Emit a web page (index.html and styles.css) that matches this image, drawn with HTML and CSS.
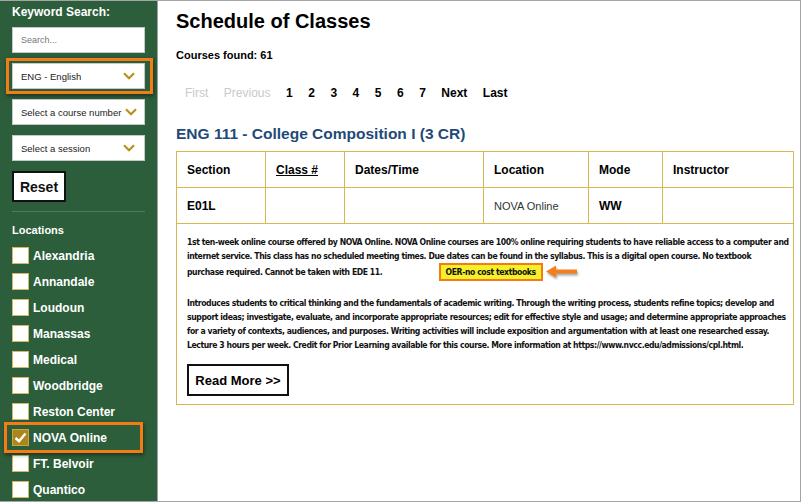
FILE: index.html
```html
<!DOCTYPE html>
<html lang="en">

<head>
    <meta charset="UTF-8">
    <title>Schedule of Classes</title>
    <link rel="stylesheet" href="styles.css">
</head>

<body>
    <div class="frame">
        <aside class="sidebar">
            <div class="side-title">Keyword Search:</div>
            <div class="field search">Search...</div>
            <div class="field select marked">ENG - English
                <svg class="chev" width="12" height="8" viewBox="0 0 12 8"><path d="M1 1.2 L6 6.2 L11 1.2" fill="none" stroke="#b8911d" stroke-width="2.2"/></svg>
            </div>
            <div class="field select">Select a course number
                <svg class="chev" width="12" height="8" viewBox="0 0 12 8"><path d="M1 1.2 L6 6.2 L11 1.2" fill="none" stroke="#b8911d" stroke-width="2.2"/></svg>
            </div>
            <div class="field select">Select a session
                <svg class="chev" width="12" height="8" viewBox="0 0 12 8"><path d="M1 1.2 L6 6.2 L11 1.2" fill="none" stroke="#b8911d" stroke-width="2.2"/></svg>
            </div>
            <button class="reset">Reset</button>
            <hr class="sep">
            <div class="side-title locs">Locations</div>
            <ul class="locations">
                <li><span class="box"></span>Alexandria</li>
                <li><span class="box"></span>Annandale</li>
                <li><span class="box"></span>Loudoun</li>
                <li><span class="box"></span>Manassas</li>
                <li><span class="box"></span>Medical</li>
                <li><span class="box"></span>Woodbridge</li>
                <li><span class="box"></span>Reston Center</li>
                <li class="marked"><span class="box checked">
                    <svg width="13" height="11" viewBox="0 0 13 11"><path d="M1.5 6 L5 9.2 L11.5 1.5" fill="none" stroke="#fff" stroke-width="2.4"/></svg>
                </span>NOVA Online</li>
                <li><span class="box"></span>FT. Belvoir</li>
                <li><span class="box"></span>Quantico</li>
            </ul>
        </aside>

        <main class="main">
            <h1>Schedule of Classes</h1>
            <p class="found">Courses found: 61</p>
            <nav class="pager">
                <span class="off">First</span>
                <span class="off">Previous</span>
                <a>1</a><a>2</a><a>3</a><a>4</a><a>5</a><a>6</a><a>7</a>
                <a>Next</a>
                <a>Last</a>
            </nav>
            <h2>ENG 111 - College Composition I (3 CR)</h2>
            <table class="classes">
                <tr>
                    <th class="c1">Section</th>
                    <th class="c2"><u>Class #</u></th>
                    <th class="c3">Dates/Time</th>
                    <th class="c4">Location</th>
                    <th class="c5">Mode</th>
                    <th>Instructor</th>
                </tr>
                <tr>
                    <td class="b">E01L</td>
                    <td></td>
                    <td></td>
                    <td class="loc">NOVA Online</td>
                    <td class="b">WW</td>
                    <td></td>
                </tr>
                <tr>
                    <td colspan="6" class="desc">
                        <p>1st ten-week online course offered by NOVA Online. NOVA Online courses are 100% online requiring students to have reliable access to a computer and internet service. This class has no scheduled meeting times. Due dates can be found in the syllabus. This is a digital open course. No textbook purchase required. Cannot be taken with EDE 11. <span class="oer">OER-no cost textbooks</span><svg class="arrow" width="36" height="18" viewBox="0 0 36 18"><path d="M2 8.5 L12 2.5 L12 6.5 L33 6.5 L33 10.5 L12 10.5 L12 14.5 Z" fill="#f37f1c"/></svg></p>
                        <p>Introduces students to critical thinking and the fundamentals of academic writing. Through the writing process, students refine topics; develop and support ideas; investigate, evaluate, and incorporate appropriate resources; edit for effective style and usage; and determine appropriate approaches for a variety of contexts, audiences, and purposes. Writing activities will include exposition and argumentation with at least one researched essay. Lecture 3 hours per week. Credit for Prior Learning available for this course. More information at https://www.nvcc.edu/admissions/cpl.html.</p>
                        <button class="more">Read More &gt;&gt;</button>
                    </td>
                </tr>
            </table>
        </main>
    </div>
</body>

</html>
```

FILE: styles.css
```css
body {
    margin: 0;
    background: #fff;
    font-family: "Liberation Sans", Arial, sans-serif;
}

.frame {
    width: 801px;
    height: 502px;
    box-sizing: border-box;
    border: 1px solid #a4a4a4;
    border-left: none;
    display: flex;
    overflow: hidden;
}

/* sidebar */
.sidebar {
    width: 158px;
    flex: none;
    background: #2c5e3b;
    border-right: 1px solid #9aa39c;
    padding: 3px 12px 0 12px;
    box-sizing: border-box;
    color: #fff;
}

.side-title {
    font-weight: bold;
    font-size: 12px;
    line-height: 16px;
    margin-bottom: 7px;
}

.field {
    height: 26px;
    box-sizing: border-box;
    background: #fff;
    border: 1px solid #c8c8c8;
    color: #222;
    font-size: 9.5px;
    display: flex;
    align-items: center;
    justify-content: space-between;
    padding: 0 8px;
    margin-bottom: 10px;
    white-space: nowrap;
}

.field.search {
    color: #777;
    font-size: 9px;
}

.chev {
    flex: none;
    margin-left: 4px;
    margin-right: 1px;
}

.marked {
    position: relative;
}

.marked::after {
    content: '';
    position: absolute;
    top: -6px;
    left: -7px;
    right: -9px;
    bottom: -6px;
    border: 3px solid #f47b16;
    box-shadow: 1px 2px 4px rgba(0, 0, 0, 0.45);
    pointer-events: none;
}

.reset {
    display: block;
    width: 54px;
    height: 31px;
    background: #fff;
    border: 2px solid #111;
    font-family: "Liberation Sans", Arial, sans-serif;
    font-weight: bold;
    font-size: 14px;
    color: #111;
    padding: 0;
}

.sep {
    border: none;
    border-top: 1px solid #4f7b5b;
    margin: 9px 0 10px;
}

.side-title.locs {
    font-size: 11px;
    margin-bottom: 9px;
}

.locations {
    list-style: none;
    margin: 0;
    padding: 0;
}

.locations li {
    display: flex;
    align-items: center;
    gap: 4px;
    height: 17px;
    margin-bottom: 9px;
    font-weight: bold;
    font-size: 12px;
}

.locations li.marked::after {
    top: -7px;
    left: -8px;
    right: 2px;
    bottom: -7px;
}

.box {
    width: 17px;
    height: 17px;
    box-sizing: border-box;
    background: #fff;
    border: 1px solid #d2b861;
    flex: none;
    display: flex;
    align-items: center;
    justify-content: center;
}

.box.checked {
    background: #ac861c;
    border-color: #c9a640;
}

/* main */
.main {
    flex: 1;
    padding: 8px 5px 0 18px;
    color: #000;
}

h1 {
    margin: 0;
    font-size: 20px;
    line-height: 24px;
}

.found {
    margin: 15px 0 0;
    font-size: 11px;
    line-height: 14px;
    font-weight: bold;
}

.pager {
    display: flex;
    gap: 15.5px;
    padding-left: 9px;
    margin-top: 23px;
    font-size: 12px;
    line-height: 16px;
    font-weight: bold;
}

.pager .off {
    color: #c9c9c9;
    font-weight: normal;
}

h2 {
    margin: 23px 0 0;
    font-size: 15.5px;
    line-height: 20px;
    color: #1f4a77;
}

.classes {
    margin-top: 7px;
    width: 618px;
    border-collapse: collapse;
    font-size: 12px;
}

.classes th,
.classes td {
    border: 1.5px solid #d6b752;
    height: 34px;
    padding: 1px 10px 0;
    text-align: left;
    vertical-align: middle;
}

.classes th {
    font-weight: bold;
}

.c1 { width: 68px; }
.c2 { width: 58px; }
.c3 { width: 118px; }
.c4 { width: 84px; }
.c5 { width: 53px; }

.classes td.b {
    font-weight: bold;
}

.classes td.loc {
    color: #333;
    font-size: 11px;
}

.classes td.desc {
    padding: 11px 3px 8px 10px;
    vertical-align: top;
}

.desc p {
    margin: 0 0 15px;
    font-family: "DejaVu Sans Condensed", "Liberation Sans", sans-serif;
    font-weight: bold;
    font-size: 8.6px;
    letter-spacing: -0.42px;
    line-height: 14px;
    color: #111;
}

.desc p + p {
    margin-bottom: 0;
}

.oer {
    display: inline-block;
    margin-left: 56px;
    padding: 1px 5px;
    background: #f6f02a;
    outline: 2px solid #f47b16;
    line-height: 12px;
}

.arrow {
    vertical-align: middle;
    margin-left: 3px;
    filter: drop-shadow(1px 2px 1px rgba(0, 0, 0, 0.35));
}

.more {
    display: block;
    margin-top: 12px;
    width: 102px;
    height: 32px;
    background: #fff;
    border: 2px solid #111;
    font-family: "Liberation Sans", Arial, sans-serif;
    font-weight: bold;
    font-size: 13px;
    padding: 0;
}
```
